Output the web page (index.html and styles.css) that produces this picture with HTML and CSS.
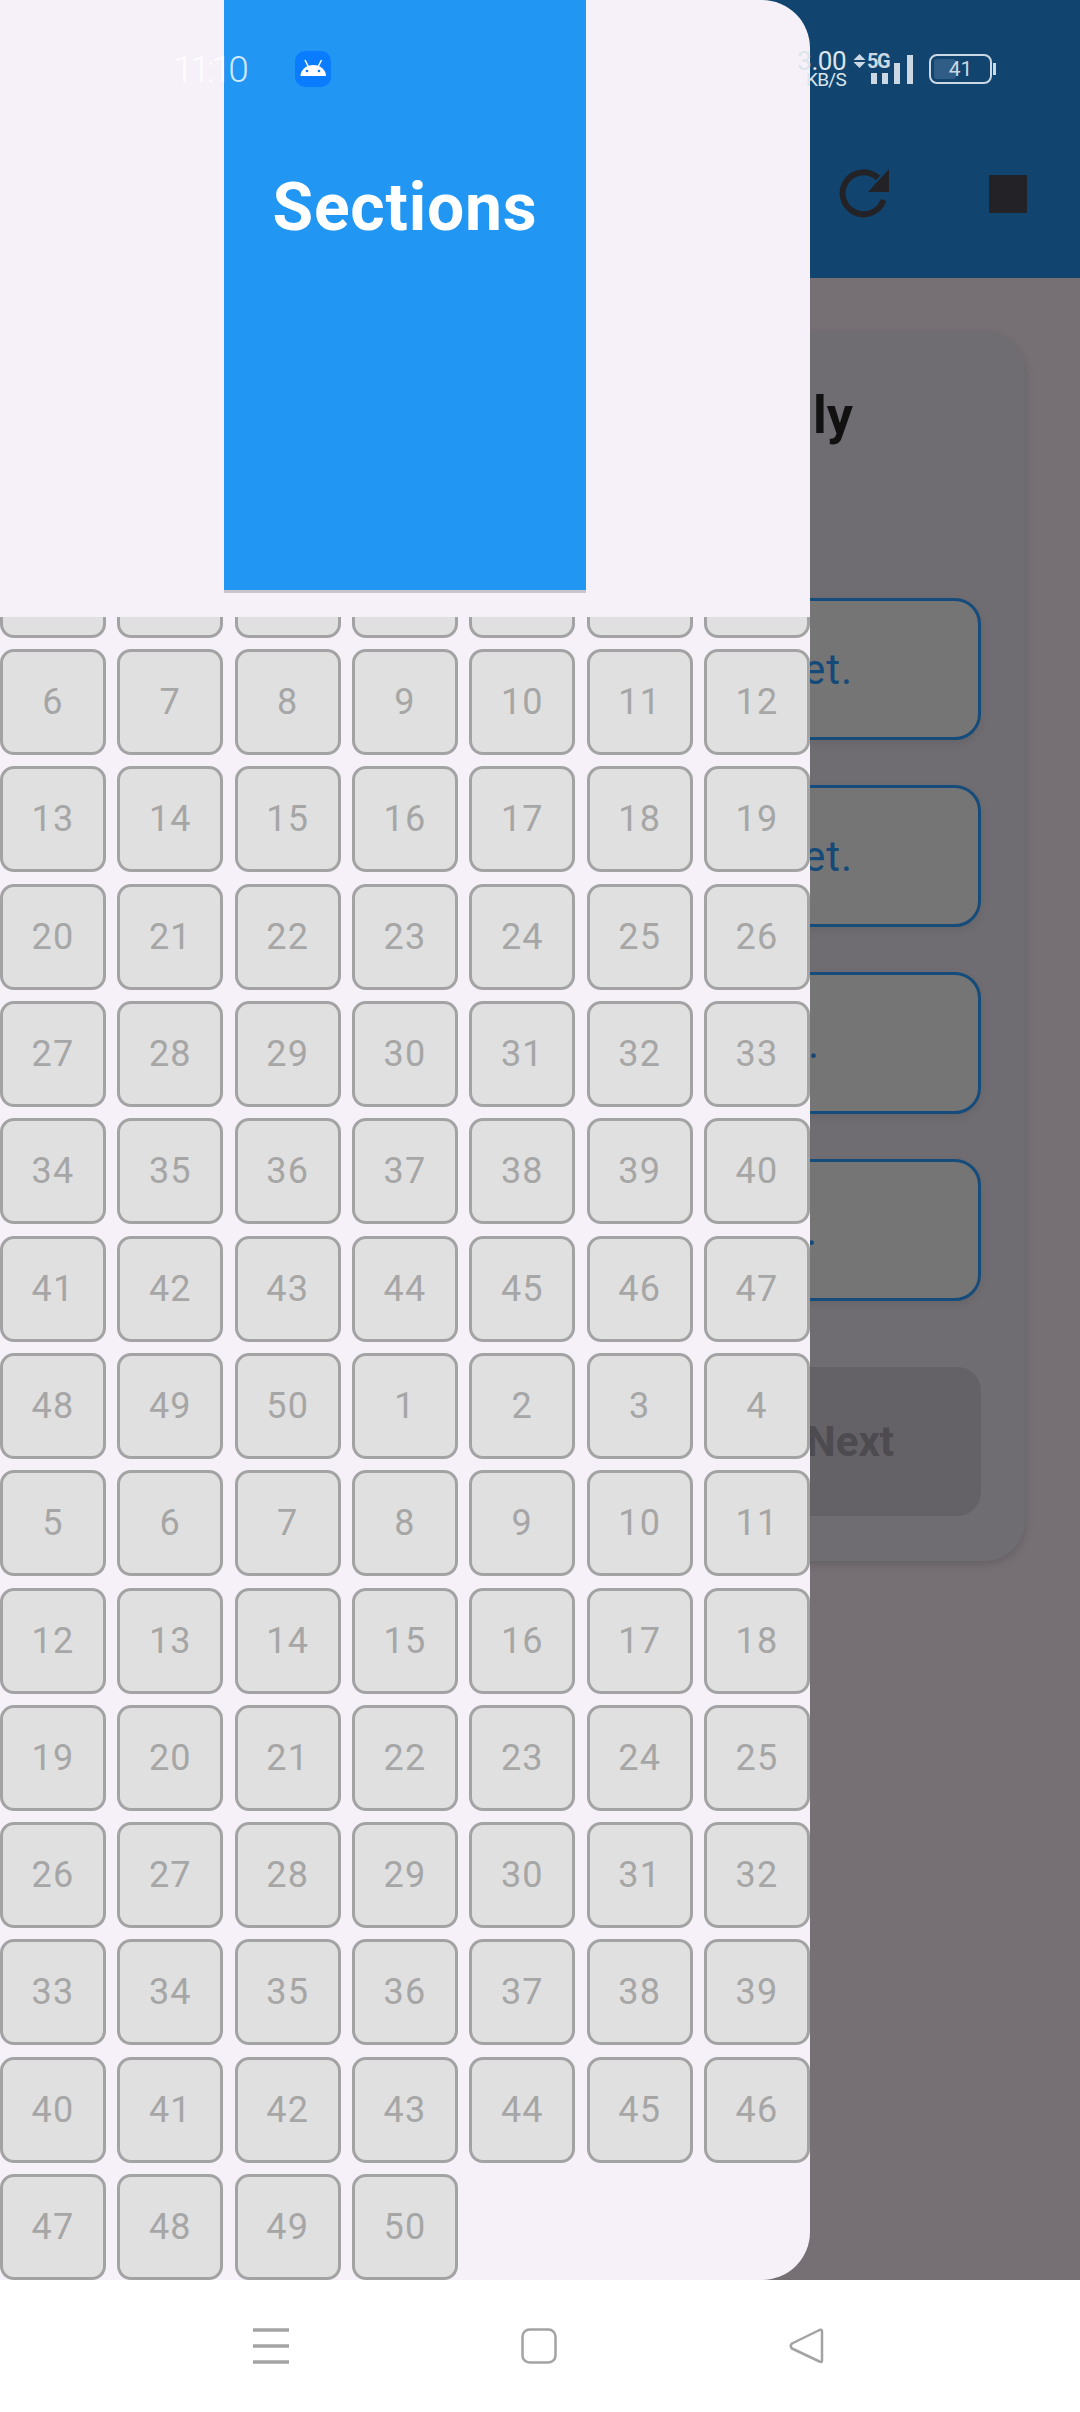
FILE: index.html
```html
<!DOCTYPE html>
<html lang="en">
<head>
    <meta charset="UTF-8">
    <meta name="viewport" content="width=device-width, initial-scale=1.0">
    <title>Sections</title>
    <link rel="stylesheet" href="styles.css">
</head>
<body>
    <div class="screen">
        <div class="stage">
            <header class="appbar">
                <svg class="icon-reload" viewBox="0 0 70 70">
                    <path d="M53.5 40A21 21 0 1 1 48 18" fill="none" stroke="#232327" stroke-width="6"/>
                    <path d="M59 9V32H38Z" fill="#232327"/>
                </svg>
                <div class="icon-stop"></div>
            </header>
            <main class="quiz">
                <div class="card">
                    <h2 class="quiz-title">ly</h2>
                    <div class="option option-long">et.</div>
                    <div class="option option-long">et.</div>
                    <div class="option option-short">.</div>
                    <div class="option option-shorter">.</div>
                    <div class="next">Next</div>
                </div>
            </main>

            <aside class="drawer">
                <div class="drawer-top">
                    <div class="drawer-header">Sections</div>
                </div>
                <div class="drawer-scroll">
                    <div class="section-grid">
                        <div class="cell"></div><div class="cell"></div><div class="cell"></div><div class="cell"></div><div class="cell"></div><div class="cell"></div><div class="cell"></div>
                        <div class="cell">6</div><div class="cell">7</div><div class="cell">8</div><div class="cell">9</div><div class="cell">10</div><div class="cell">11</div><div class="cell">12</div>
                        <div class="cell">13</div><div class="cell">14</div><div class="cell">15</div><div class="cell">16</div><div class="cell">17</div><div class="cell">18</div><div class="cell">19</div>
                        <div class="cell">20</div><div class="cell">21</div><div class="cell">22</div><div class="cell">23</div><div class="cell">24</div><div class="cell">25</div><div class="cell">26</div>
                        <div class="cell">27</div><div class="cell">28</div><div class="cell">29</div><div class="cell">30</div><div class="cell">31</div><div class="cell">32</div><div class="cell">33</div>
                        <div class="cell">34</div><div class="cell">35</div><div class="cell">36</div><div class="cell">37</div><div class="cell">38</div><div class="cell">39</div><div class="cell">40</div>
                        <div class="cell">41</div><div class="cell">42</div><div class="cell">43</div><div class="cell">44</div><div class="cell">45</div><div class="cell">46</div><div class="cell">47</div>
                        <div class="cell">48</div><div class="cell">49</div><div class="cell">50</div><div class="cell">1</div><div class="cell">2</div><div class="cell">3</div><div class="cell">4</div>
                        <div class="cell">5</div><div class="cell">6</div><div class="cell">7</div><div class="cell">8</div><div class="cell">9</div><div class="cell">10</div><div class="cell">11</div>
                        <div class="cell">12</div><div class="cell">13</div><div class="cell">14</div><div class="cell">15</div><div class="cell">16</div><div class="cell">17</div><div class="cell">18</div>
                        <div class="cell">19</div><div class="cell">20</div><div class="cell">21</div><div class="cell">22</div><div class="cell">23</div><div class="cell">24</div><div class="cell">25</div>
                        <div class="cell">26</div><div class="cell">27</div><div class="cell">28</div><div class="cell">29</div><div class="cell">30</div><div class="cell">31</div><div class="cell">32</div>
                        <div class="cell">33</div><div class="cell">34</div><div class="cell">35</div><div class="cell">36</div><div class="cell">37</div><div class="cell">38</div><div class="cell">39</div>
                        <div class="cell">40</div><div class="cell">41</div><div class="cell">42</div><div class="cell">43</div><div class="cell">44</div><div class="cell">45</div><div class="cell">46</div>
                        <div class="cell">47</div><div class="cell">48</div><div class="cell">49</div><div class="cell">50</div>
                    </div>
                </div>
            </aside>
        </div>

        <nav class="navbar">
            <svg class="nav-icon" width="36" height="36" viewBox="0 0 36 36">
                <path d="M0 2H36M0 18H36M0 34H36" stroke="#a3a3a3" stroke-width="3.5"/>
            </svg>
            <svg class="nav-icon" width="36" height="36" viewBox="0 0 36 36">
                <rect x="1.5" y="1.5" width="33" height="33" rx="7" fill="none" stroke="#a3a3a3" stroke-width="2.5"/>
            </svg>
            <svg class="nav-icon" width="36" height="36" viewBox="0 0 36 36">
                <path d="M33 3.5V32.500Q33 35 30.500 33.500L3 20.500Q0.500 18 3 15.500L30.500 2Q33 1 33 3.500Z" fill="none" stroke="#a3a3a3" stroke-width="2.5" stroke-linejoin="round"/>
            </svg>
        </nav>

        <div class="statusbar">
            <span class="clock">11:10</span>
            <svg class="app-badge" width="36" height="36" viewBox="0 0 36 36">
                <rect width="36" height="36" rx="10" fill="#0a7cff"/>
                <path d="M5.500 25A12.750 11 0 0 1 31 25Z" fill="#fff"/>
                <path d="M10 9L13.500 16M26.500 9L23 16" stroke="#fff" stroke-width="1.500"/>
                <circle cx="12" cy="20" r="1.300" fill="#0a7cff"/>
                <circle cx="24" cy="20" r="1.300" fill="#0a7cff"/>
            </svg>
            <div class="status-right">
                <div class="netspeed">
                    <span class="netspeed-value">3.00</span>
                    <span class="netspeed-unit">KB/S</span>
                </div>
                <svg class="signal" width="60" height="32" viewBox="0 0 60 32">
                    <path d="M6.500 1L12.500 7H0.500ZM6.500 15L0.500 9H12.500Z" fill="#ccd8e3"/>
                    <text x="14" y="15" class="signal-label">5G</text>
                    <rect x="18" y="20" width="6" height="11" fill="#ccd8e3"/>
                    <rect x="29" y="20" width="6" height="11" fill="#ccd8e3"/>
                    <rect x="41" y="10" width="6" height="21" fill="#ccd8e3"/>
                    <rect x="54" y="2" width="6" height="29" fill="#ccd8e3"/>
                </svg>
                <div class="battery">
                    <div class="battery-level"></div>
                    <span class="battery-text">41</span>
                </div>
                <div class="battery-nub"></div>
            </div>
        </div>
    </div>
</body>
</html>
```

FILE: styles.css
```css
* {
    box-sizing: border-box;
}
body {
    margin: 0;
    font-family: Roboto, "Noto Sans", sans-serif;
    background-color: #fff;
}
.screen {
    position: relative;
    width: 1080px;
    height: 2412px;
    overflow: hidden;
    display: flex;
    flex-direction: column;
}
.stage {
    position: relative;
    height: 2280px;
    background-color: #767074;
}

/* page behind the drawer */
.appbar {
    height: 278px;
    padding: 110px 53px 0 0;
    background-color: #11446f;
    display: flex;
    justify-content: flex-end;
    align-items: center;
    gap: 100px;
}
.icon-reload {
    width: 70px;
    height: 70px;
    margin: 2px -11px 0 0;
}
.icon-stop {
    width: 38px;
    height: 38px;
    background-color: #232327;
}
.quiz {
    padding: 54px 55px 0;
}
.card {
    height: 1229px;
    padding: 54px 44px 45px;
    background-color: #6f6d71;
    border-radius: 40px;
    box-shadow: 0 3px 8px rgba(0,0,0,0.15);
    display: flex;
    flex-direction: column;
    gap: 45px;
}
.quiz-title {
    margin: 0 0 107px;
    padding-right: 128px;
    font-size: 52px;
    line-height: 60px;
    font-weight: 700;
    color: #111;
    text-align: right;
}
.option {
    height: 142px;
    background-color: #757575;
    border: 3px solid #154c7c;
    border-radius: 26px;
    box-shadow: 0 3px 8px rgba(0,0,0,0.08);
    display: flex;
    justify-content: flex-end;
    align-items: center;
    font-size: 42px;
    letter-spacing: 1px;
    color: #154a78;
}
.option-long {
    padding-right: 125px;
}
.option-short {
    padding-right: 158px;
}
.option-shorter {
    padding-right: 160px;
}
.next {
    height: 149px;
    margin-top: 21px;
    padding-right: 87px;
    background-color: #646266;
    border-radius: 24px;
    display: flex;
    justify-content: flex-end;
    align-items: center;
    font-size: 42px;
    font-weight: 700;
    color: #4d4b4f;
}

/* drawer */
.drawer {
    position: absolute;
    top: 0;
    left: 0;
    bottom: 0;
    width: 810px;
    background-color: #f6f1f9;
    border-radius: 0 48px 48px 0;
    overflow: hidden;
    display: flex;
    flex-direction: column;
}
.drawer-top {
    flex: none;
    height: 617px;
    display: flex;
    justify-content: center;
    align-items: flex-start;
}
.drawer-header {
    width: 362px;
    height: 593px;
    padding-top: 170px;
    background-color: #2196f3;
    border-bottom: 3px solid #c9c5cd;
    font-size: 66px;
    line-height: 76px;
    letter-spacing: 0.8px;
    font-weight: 700;
    color: #fff;
    text-align: center;
}
.drawer-scroll {
    flex: 1;
    min-height: 0;
    overflow: hidden;
    display: flex;
    flex-direction: column;
    justify-content: flex-end;
}
.section-grid {
    flex: none;
    display: grid;
    grid-template-columns: repeat(7, 106px);
    grid-auto-rows: 106px;
    gap: 11.3px 11.33px;
}
.cell {
    background-color: #e0e0e0;
    border: 3px solid #a3a3a3;
    border-radius: 14px;
    display: flex;
    justify-content: center;
    align-items: center;
    font-size: 36px;
    letter-spacing: 1.2px;
    color: #a6a6a6;
}

/* nav bar */
.navbar {
    flex: none;
    height: 132px;
    padding-left: 253px;
    background-color: #fff;
    display: flex;
    align-items: center;
    gap: 232px;
}

/* status bar sits over everything */
.statusbar {
    position: absolute;
    top: 51px;
    left: 0;
    right: 0;
    height: 36px;
    padding: 0 84px 0 173px;
    display: flex;
    align-items: center;
}
.clock {
    width: 122px;
    font-size: 37px;
    letter-spacing: -3.5px;
    font-weight: 300;
    color: rgba(255,255,255,0.8);
}
.status-right {
    margin-left: auto;
    display: flex;
    align-items: center;
}
.netspeed {
    width: 50px;
    margin-right: 7px;
    display: flex;
    flex-direction: column;
    align-items: flex-end;
    color: #dce5ec;
}
.netspeed-value {
    font-size: 26px;
    line-height: 20px;
    letter-spacing: -0.5px;
}
.netspeed-unit {
    font-size: 19px;
    line-height: 17px;
    letter-spacing: -0.7px;
}
.signal {
    margin-right: 16px;
    overflow: visible;
}
.signal-label {
    font-family: Roboto, sans-serif;
    font-size: 20px;
    font-weight: 700;
    letter-spacing: -1.5px;
    fill: #ccd8e3;
}
.battery {
    position: relative;
    width: 63px;
    height: 30px;
    border: 2.5px solid #ccd8e3;
    border-radius: 8px;
    display: flex;
    justify-content: center;
    align-items: center;
}
.battery-level {
    position: absolute;
    top: 3px;
    left: 3px;
    bottom: 3px;
    width: 22px;
    background-color: #305d86;
    border-radius: 3px;
}
.battery-text {
    position: relative;
    font-size: 21px;
    color: #ccd8e3;
}
.battery-nub {
    width: 3px;
    height: 12px;
    margin-left: 1px;
    background-color: #ccd8e3;
}
```
